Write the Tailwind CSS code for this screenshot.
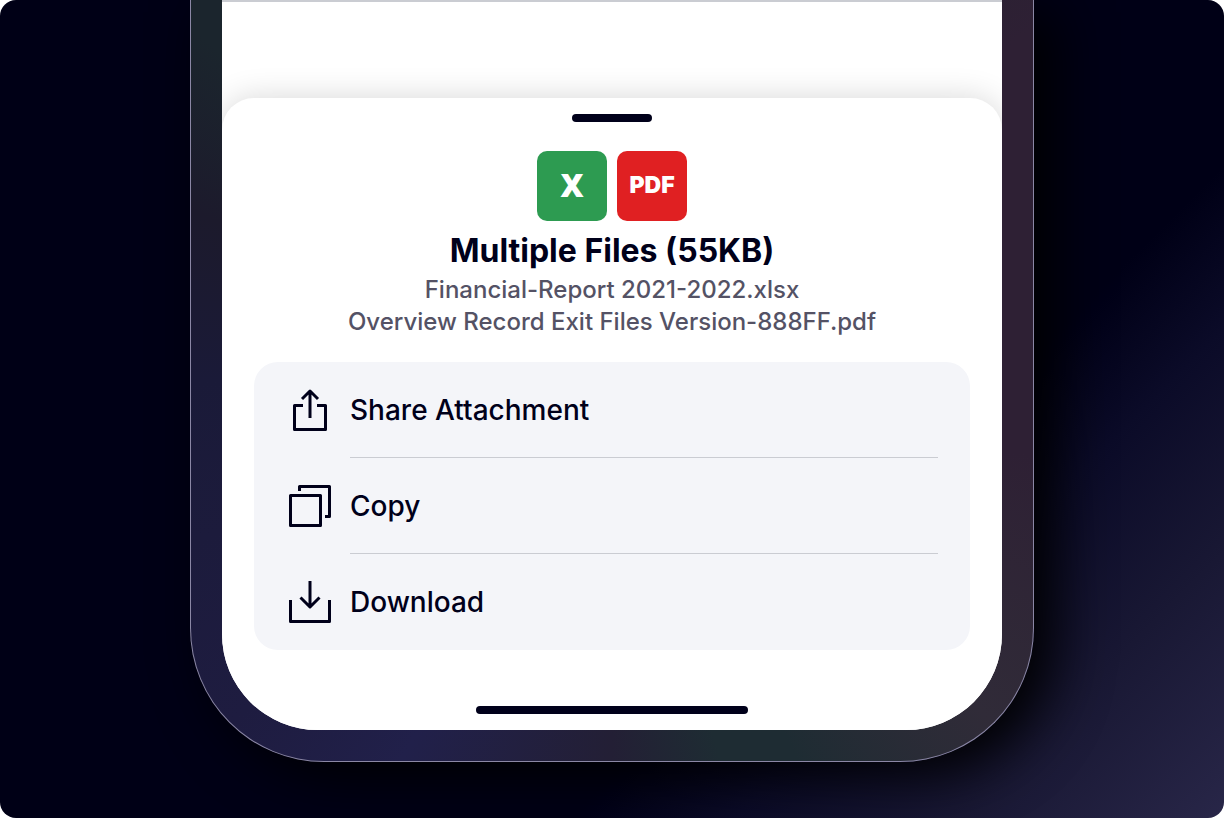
<!DOCTYPE html>
<html lang="en">

<head>
  <title>Multiple Files</title>
  <meta charset="UTF-8">
  <meta name="viewport" content="width=device-width, initial-scale=1.0">
  <script src="https://cdn.jsdelivr.net/npm/@tailwindcss/browser@4"></script>
</head>

<body class="bg-white font-['Inter',sans-serif] text-[#00001a]">
  <main class="min-h-screen overflow-hidden rounded-2xl bg-[linear-gradient(135deg,#000016_0%,#000016_68%,#0b0b28_76%,#191834_87%,#282648_100%)] px-4 pb-14">

    <!-- phone frame -->
    <div class="mx-auto max-w-[844px] rounded-b-[134px] border-x border-b border-[#8b87a5] bg-[conic-gradient(#1b252d_0deg,#2e2034_50deg,#2e2034_100deg,#302b38_132deg,#1e2c33_154deg,#1e2c33_164deg,#231f35_180deg,#21204a_209deg,#1e1c40_228deg,#1a1a38_270deg,#1c1a2c_292deg,#1b252d_310deg,#1b252d_360deg)] px-[31px] pb-[31px] shadow-[20px_12px_56px_#000000]">
      <div class="overflow-hidden rounded-b-[96px] border-t-2 border-[#caccd2] bg-white pt-24">

        <!-- bottom sheet -->
        <section class="flex flex-col items-center rounded-t-[32px] bg-white px-8 py-4 shadow-[0_0_32px_rgba(0,0,0,0.16)]">
          <div class="h-2 w-20 rounded-full bg-[#00001a]"></div>

          <div class="mt-[29px] flex gap-[10px] text-white">
            <div class="flex size-[70px] items-center justify-center rounded-[10px] bg-[#2d9b51] pb-[2px] font-['Open_Sans',sans-serif] text-[32px] font-extrabold">X</div>
            <div class="flex size-[70px] items-center justify-center rounded-[10px] bg-[#e02022] pb-[2px] text-[23px] font-black">PDF</div>
          </div>

          <h1 class="mt-[10px] text-[32px] leading-10 font-bold">Multiple Files (55KB)</h1>
          <p class="mt-[3px] text-center text-2xl leading-8 font-medium text-[#545265]">
            Financial-Report 2021-2022.xlsx<br>
            Overview Record Exit Files Version-888FF.pdf
          </p>

          <ul class="mt-6 w-full rounded-3xl bg-[#f4f5f9] text-[28px] font-medium">
            <li>
              <button class="flex h-24 w-full items-center gap-4 px-8 text-left">
                <svg class="size-12 shrink-0" viewBox="0 0 48 48" fill="none" stroke="currentColor" stroke-width="3" stroke-linejoin="round">
                  <path d="M17 19.500H8.500V43.500H39.500V19.500H31M24 32V5M16 13L24 5L32 13" />
                </svg>
                <span class="flex h-full flex-1 items-center border-b border-[#caccd2]">Share Attachment</span>
              </button>
            </li>
            <li>
              <button class="flex h-24 w-full items-center gap-4 px-8 text-left">
                <svg class="size-12 shrink-0" viewBox="0 0 48 48" fill="none" stroke="currentColor" stroke-width="3" stroke-linejoin="round">
                  <path d="M4.500 13.500H34.500V43.500H4.500ZM13.500 9V4.500H43.500V34.500H39" />
                </svg>
                <span class="flex h-full flex-1 items-center border-b border-[#caccd2]">Copy</span>
              </button>
            </li>
            <li>
              <button class="flex h-24 w-full items-center gap-4 px-8 text-left">
                <svg class="size-12 shrink-0" viewBox="0 0 48 48" fill="none" stroke="currentColor" stroke-width="3" stroke-linejoin="round">
                  <path d="M4.500 22V43.500H43.500V22M24 3V29M14.500 19.500L24 29L33.500 19.500" />
                </svg>
                <span class="flex h-full flex-1 items-center">Download</span>
              </button>
            </li>
          </ul>

          <!-- home indicator -->
          <div class="mt-14 h-2 w-[272px] rounded-full bg-[#00001a]"></div>
        </section>
      </div>
    </div>
  </main>
</body>

</html>
